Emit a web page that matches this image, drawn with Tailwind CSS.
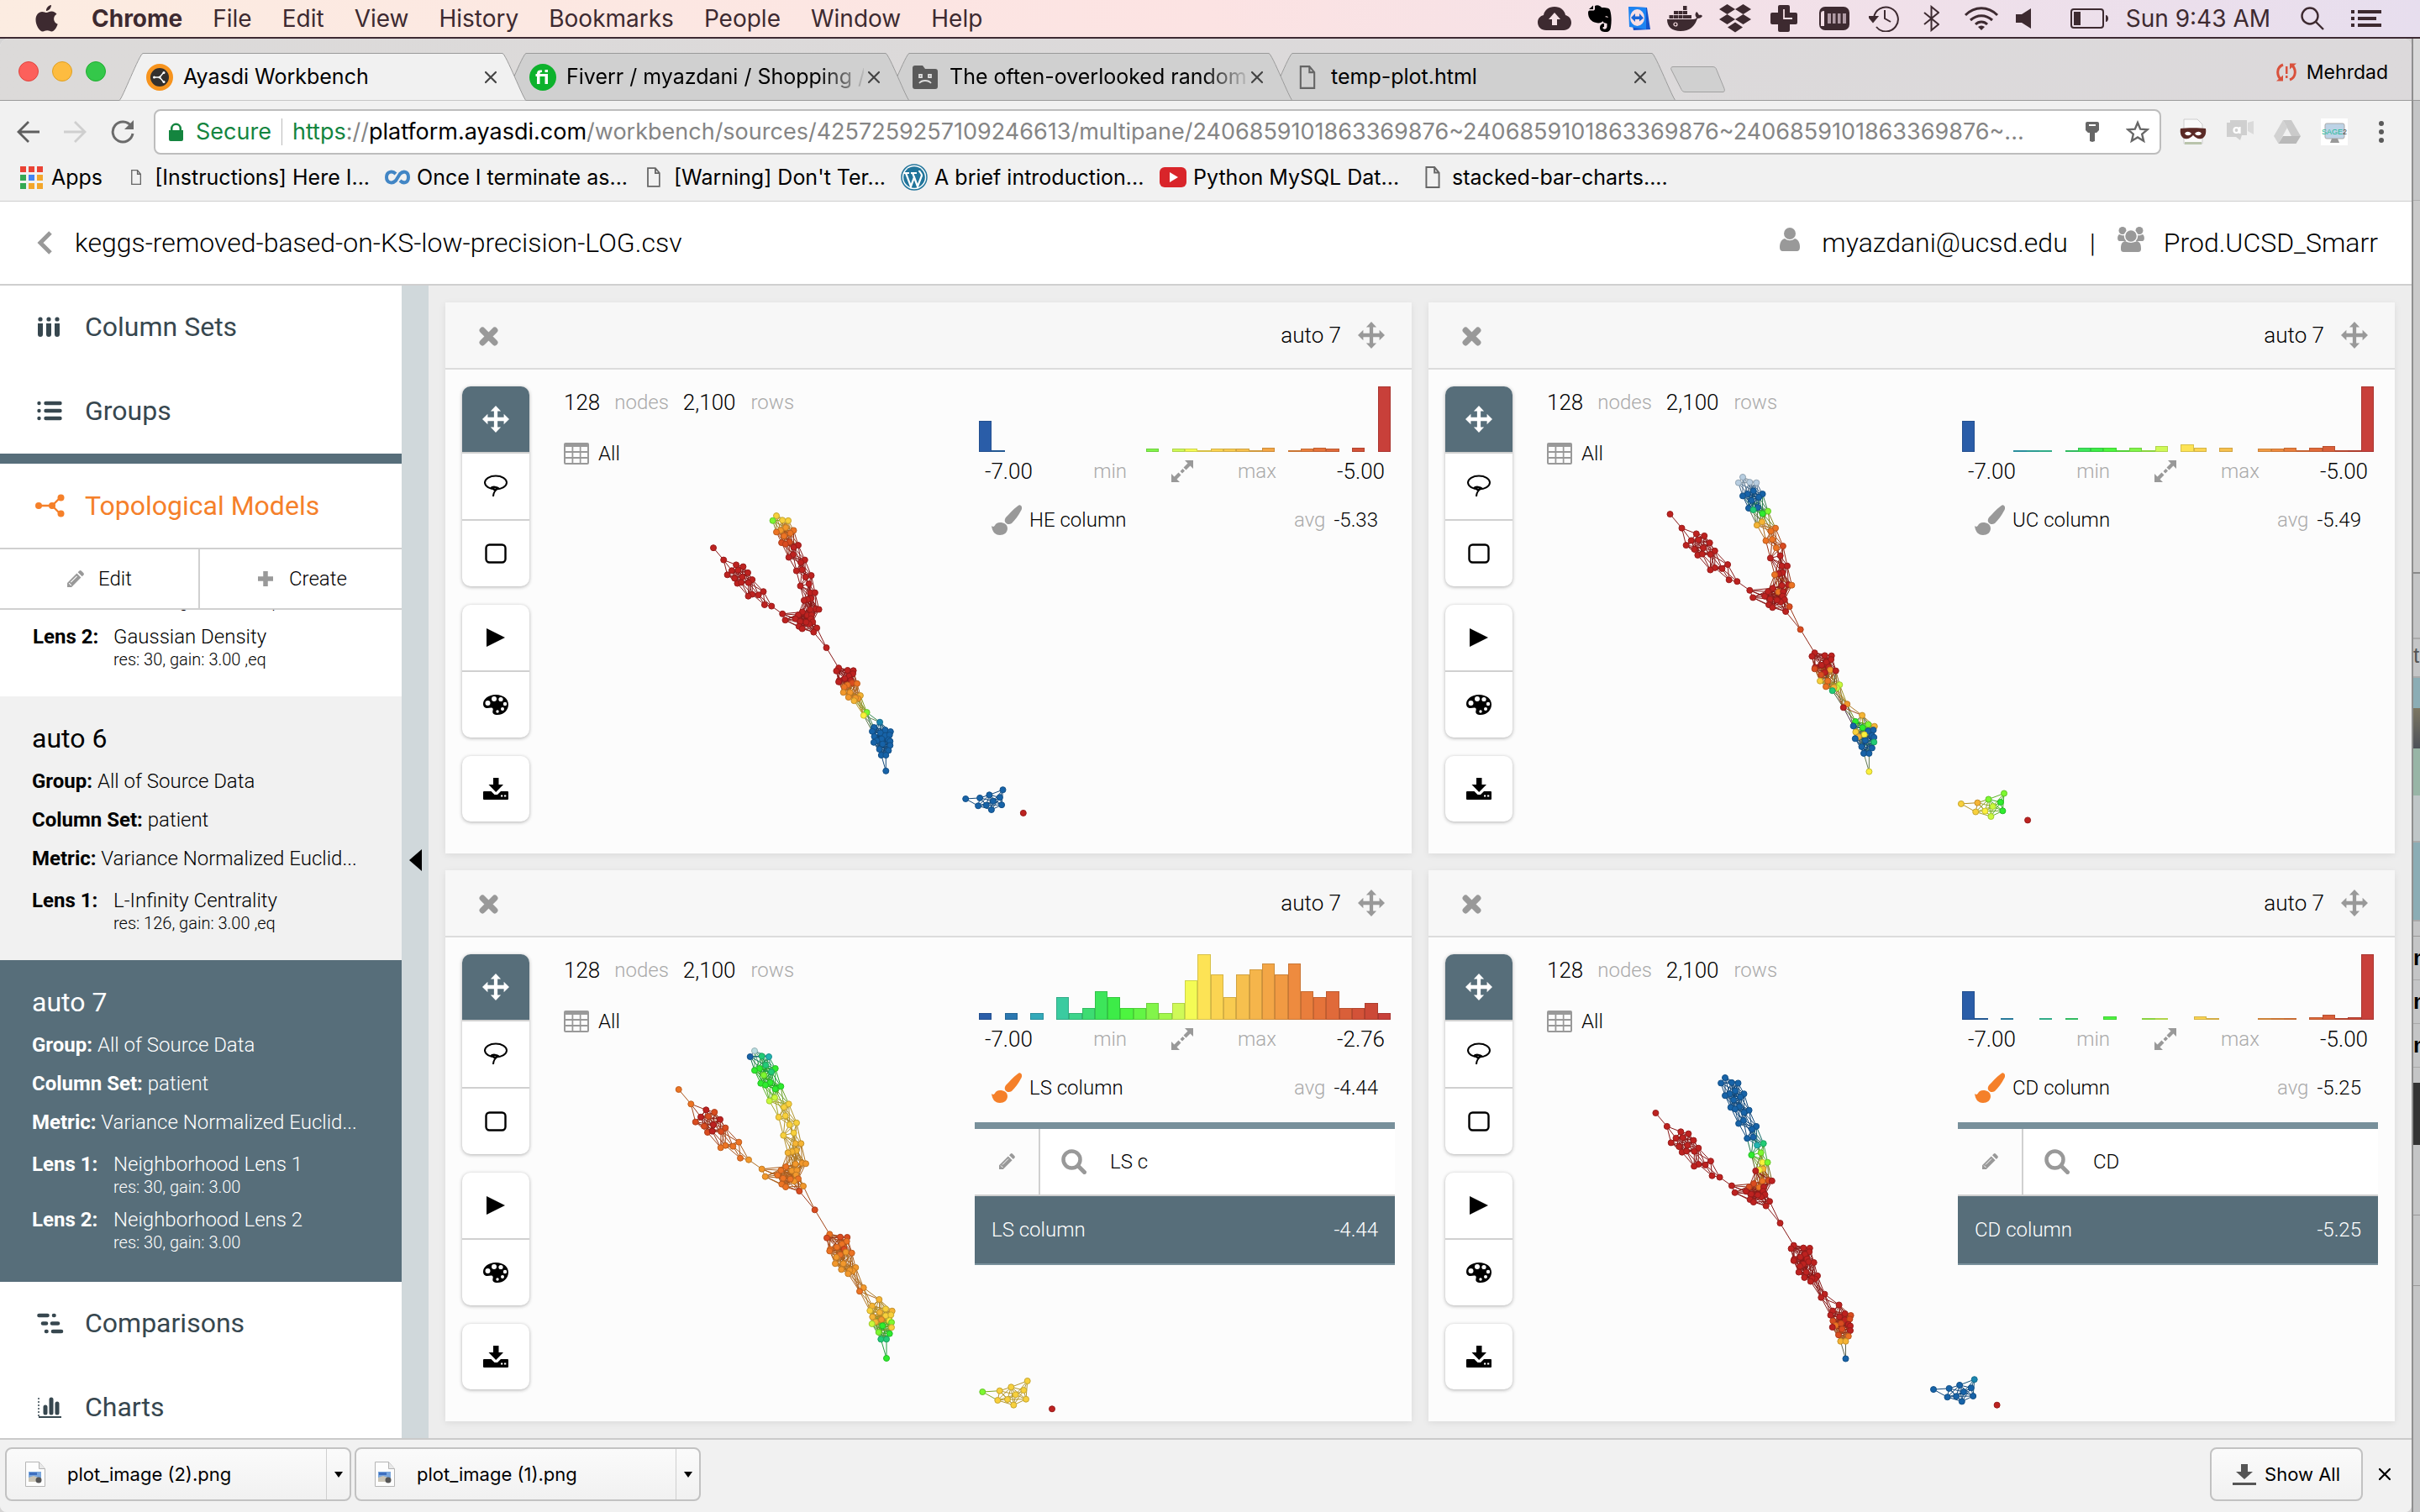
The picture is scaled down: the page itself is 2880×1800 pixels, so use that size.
<!DOCTYPE html>
<html lang="en">
<head>
<meta charset="utf-8">
<title>Ayasdi Workbench</title>
<script src="https://cdn.jsdelivr.net/npm/@tailwindcss/browser@4"></script>
</head>
<body class="bg-[#4a3a44]">
<svg class="hidden" aria-hidden="true">
  <symbol id="move" viewBox="0 0 24 24"><path d="M12 0l4.6 4.8h-3v5.6h5.6v-3L24 12l-4.8 4.6v-3h-5.600v5.600h3L12 24l-4.600-4.800h3v-5.600H4.800v3L0 12l4.800-4.600v3h5.600V4.800h-3z"/></symbol>
  <symbol id="times" viewBox="0 0 24 24"><path d="M5 5l14 14M19 5L5 19" stroke="currentColor" stroke-width="7" stroke-linecap="round" fill="none"/></symbol>
  <symbol id="cross" viewBox="0 0 16 16"><path d="M2 2l12 12M14 2L2 14" stroke="currentColor" stroke-width="2.200" stroke-linecap="round" fill="none"/></symbol>
  <symbol id="lasso" viewBox="0 0 30 28"><g fill="none" stroke="currentColor" stroke-width="2"><ellipse cx="15" cy="9.500" rx="13" ry="8"/><path d="M9 16c2-2 6-2 7 0s-3 3-4 1 3-3 6-1c-3 2-6 5-6 10"/></g></symbol>
  <symbol id="square" viewBox="0 0 26 24"><rect x="1.500" y="1.500" width="23" height="21" rx="4" fill="none" stroke="currentColor" stroke-width="2.400"/></symbol>
  <symbol id="play" viewBox="0 0 22 24"><path d="M0 1v22l22-11z"/></symbol>
  <symbol id="palette" viewBox="0 0 30 24"><path d="M15 0C6.500 0 0 5 0 11c0 3 2 5 5 5 2.500 0 4.500-1 6 0 2 1.500-1 4 1 6.500 1 1.200 3 1.500 5 1.500 8 0 13-6 13-12.500C30 5 24 0 15 0z"/><g fill="#fff"><circle cx="5.500" cy="10" r="3"/><circle cx="13" cy="5" r="3"/><circle cx="21" cy="5.500" r="2.600"/><circle cx="26" cy="11" r="2.200"/><circle cx="23" cy="17" r="2"/><circle cx="17" cy="20" r="1.700"/></g></symbol>
  <symbol id="download" viewBox="0 0 30 26"><path d="M12 0h6.500v8H24l-8.800 9L6.500 8H12zM1 16h8.500l4 4h3.500l4-4H29a1 1 0 0 1 1 1v8a1 1 0 0 1-1 1H1a1 1 0 0 1-1-1v-8a1 1 0 0 1 1-1z"/><path d="M21 21.500h2.300M25 21.500h2.300" stroke="#fff" stroke-width="2"/></symbol>
  <symbol id="grid" viewBox="0 0 30 26"><path d="M2 0h26a2 2 0 0 1 2 2v22a2 2 0 0 1-2 2H2a2 2 0 0 1-2-2V2a2 2 0 0 1 2-2zM2 5v5h7.500V5zM11.300 5v5h7.500V5zM20.500 5v5H28V5zM2 12v5h7.500v-5zM11.300 12v5h7.500v-5zM20.500 12v5H28v-5zM2 19v5h7.500v-5zM11.300 19v5h7.500v-5zM20.500 19v5H28v-5z" fill-rule="evenodd"/></symbol>
  <symbol id="expand" viewBox="0 0 28 28"><path d="M17 1h10v10l-3.500-3.500-5 5-3-3 5-5zM1 27V17l3.500 3.500 5-5 3 3-5 5L11 27zM14.500 11l2.500 2.500-3 3-2.500-2.500z"/></symbol>
  <symbol id="brush" viewBox="0 0 36 36"><path d="M35 1c2 2 1 4 0 6-3 6-7 11-11 15-3 2-6 1-7.500-1-1.200-2-1-4 .5-6C21 11 26 5 31 1.500 33 0 34 0 35 1z"/><path d="M10 21c5 0 9 2.500 9 7 0 5-4 8-9 8-6 0-9-4-10-11 2 1.500 3 1 4-.5C5 22.500 7 21 10 21z"/></symbol>
  <symbol id="pencil" viewBox="0 0 20 20"><path d="M1 14.200L11.800 3.400l4.800 4.800L5.800 19H1zM13 2.200l1.500-1.500c.8-.8 1.800-.8 2.600 0l2.200 2.200c.8.800.8 1.800 0 2.600L17.800 7z"/><path d="M3 14.500l2.500 2.500M5 13.500l7-7" stroke="#fff" stroke-width="1" fill="none"/></symbol>
  <symbol id="search" viewBox="0 0 30 30"><g fill="none" stroke="currentColor"><circle cx="12.500" cy="12.500" r="10" stroke-width="4.500"/><path d="M20 20l7.500 7.500" stroke-width="5" stroke-linecap="round"/></g></symbol>
  <symbol id="doc" viewBox="0 0 16 24"><path d="M1 1h9l5 6v16H1zM10 1v6h5" fill="none" stroke="#666" stroke-width="1.800"/></symbol>
  <symbol id="png" viewBox="0 0 24 30"><path d="M.5.500h16l7 8v21H.5z" fill="#fdfdfd" stroke="#b5b5b5"/><path d="M16.500.500v8h7" fill="#e8e8e8" stroke="#b5b5b5"/><path d="M4 12h15v12H4z" fill="#7aa7dd"/><path d="M4 19l6-2 9 3v4H4z" fill="#c9c4b5"/><path d="M5 13h9v3H5z" fill="#3f6fc0"/><circle cx="16" cy="22" r="3.500" fill="#555"/></symbol>
</svg>

<div class="flex h-screen flex-col overflow-hidden font-['Inter','Liberation_Sans',sans-serif] text-black">
  <!-- System menu bar -->
  <header class="flex h-[46px] shrink-0 items-center border-b-2 border-[#3d2a33] bg-linear-to-r from-[#fcece1] via-[#fce3e3] to-[#e7deee] pr-[46px] pl-[42px] text-[28px] text-[#3d2a30]">
    <svg class="mr-[40px] h-[32px] w-[27px]" viewBox="0 0 27 32" fill="currentColor"><path d="M19 0c.2 3-2.600 7-6 7-.4-3 2.600-6.600 6-7zM13.500 9c1.500 0 3-1.500 6-1.500 2.500 0 4.700 1.300 6 3.200-5 3-4.300 10 1.200 12-1.500 4.200-4.200 8.800-7.200 8.800-2 0-2.800-1.200-5.300-1.200S10.700 31.500 8.900 31.500C5 31.500.5 24 .5 17.500c0-6 3.700-9.600 7.600-9.600 2.400 0 4 1.100 5.400 1.100z"/></svg>
    <nav class="flex items-center gap-[36px]"><b>Chrome</b><span>File</span><span>Edit</span><span>View</span><span>History</span><span>Bookmarks</span><span>People</span><span>Window</span><span>Help</span></nav>
    <div class="ml-auto flex items-center gap-[20px]">
      <svg class="h-[28px] w-[40px]" viewBox="0 0 40 28" fill="currentColor"><path fill-rule="evenodd" d="M10 28C4 28 0 24 0 18.500 0 14 3 11 7 10 8 4 13 0 20 0c7 0 12 4 13 10 4 1 7 4 7 9 0 5-4 9-9 9zM20 7l-7 8h4v7h6v-7h4z"/></svg>
      <svg class="h-[32px] w-[28px]" viewBox="0 0 28 32" fill="#000"><path d="M8 1c3-2 7 0 8 2 4 0 9 0 10 3 2 6 2 14 1 20-.5 4-2 6-6 6s-7-1-7-5c0-3 2-5 5-5v4c-2 0-2 2-.5 2.500 2 .5 4-.500 4-3V22c-3-1-5-1-5-3-1 2-5 3-8 2C4 20 0 16 0 9c0-2 1-2.500 3-2.500h3c1 0 2-.500 2-2zM1 5l5-4.500V5z"/><path d="M20 14c1-1.500 3.500-1 4 1-1-.500-3-.500-4-1z" fill="#f7dfe3"/></svg>
      <svg class="h-[30px] w-[26px]" viewBox="0 0 26 30"><path d="M0 1l22 1 4 26-20 1z" fill="#1653c9"/><path d="M0 1l21 1v26L1 25z" fill="#1d84f2"/><ellipse cx="10.500" cy="14" rx="8.500" ry="10" fill="#fadfe3"/><path d="M3 14l5-5v3.500h5V9l5 5.500-5 4V16H8v3z" fill="#1b66d8"/></svg>
      <svg class="h-[31px] w-[42px]" viewBox="0 0 42 31" fill="currentColor"><path d="M0 16h31c2 0 4-1 4-2-2-2-2-5 0-7 2 1 2 3 3 4 2-.500 3 0 4 1-1 2-3 3-6 3-3 9-9 15-20 15C6 30 0 25 0 16z"/><path d="M2.500 11h5v4h-5zm5.500 0h5v4H8zm5.500 0h5v4h-5zm5.500 0h5v4h-5zM8 6h5v4H8zm5.500 0h5v4h-5zM19 6h5v4h-5zm5 5h5v4h-5zM19 0h4.500v5H19z"/><circle cx="10" cy="22" r="2" fill="none" stroke="#f7dfe3" stroke-width="1.200"/></svg>
      <svg class="h-[34px] w-[38px]" viewBox="0 0 38 34" fill="currentColor"><path d="M9.500 0l9.500 6-9.500 6L0 6zM28.500 0L38 6l-9.500 6L19 6zM9.500 12l9.500 6-9.500 6L0 18zM28.500 12l9.500 6-9.500 6-9.500-6zM19 21.500l9 6-9 6-9-6z"/></svg>
      <svg class="mx-[3px] h-[32px] w-[32px]" viewBox="0 0 32 32" fill="currentColor"><path d="M11 0h10a2 2 0 0 1 2 2v7h7a2 2 0 0 1 2 2v10a2 2 0 0 1-2 2h-7v7a2 2 0 0 1-2 2H11a2 2 0 0 1-2-2v-7H2a2 2 0 0 1-2-2V11a2 2 0 0 1 2-2h7V2a2 2 0 0 1 2-2z"/><path d="M16 5v11h10" fill="none" stroke="#f5dfe4" stroke-width="1.800"/></svg>
      <svg class="mx-[3px] h-[28px] w-[36px]" viewBox="0 0 36 28"><rect width="36" height="28" rx="7" fill="#3d2a30"/><path d="M6 5v18H2V8c0-2 1-3 4-3z" fill="#f3dfe6"/><path d="M10 8h4v12h-4zm6 0h3.500v12H16zm6 0h3.500v12H22zm6 0h4v12h-4z" fill="#b09ba5"/></svg>
      <svg class="h-[32px] w-[36px]" viewBox="0 0 36 32" fill="none" stroke="currentColor" stroke-width="2"><path d="M6 15A14.500 14.500 0 1 1 9 26"/><path d="M0 14h10l-5 6z" fill="currentColor"/><path d="M19 6v10l7 4"/></svg>
      <svg class="mx-[9px] h-[32px] w-[19px]" viewBox="0 0 19 32" fill="none" stroke="currentColor" stroke-width="2"><path d="M1 9l17 14-8.500 7V2L18 9 1 23"/></svg>
      <svg class="h-[28px] w-[42px]" viewBox="0 0 42 28" fill="none" stroke="currentColor" stroke-width="3"><path d="M2 10c11-11 27-11 38 0M8 16c8-7 18-7 26 0M14 21c4-4 10-4 14 0"/><path d="M17 24a6 6 0 0 1 8 0l-4 4z" fill="currentColor" stroke="none"/></svg>
      <svg class="mr-[27px] h-[24px] w-[18px]" viewBox="0 0 18 24" fill="currentColor"><path d="M0 7h7l11-7v24L7 17H0z"/></svg>
      <svg class="h-[24px] w-[46px]" viewBox="0 0 46 24" fill="currentColor"><rect x="1" y="1" width="38" height="22" rx="3" fill="none" stroke="currentColor" stroke-width="2"/><path d="M4 4h8v16H4zM42 8c4 0 4 8 0 8z"/></svg>
      <time>Sun 9:43 AM</time>
      <svg class="ml-[16px] h-[28px] w-[28px]" viewBox="0 0 28 28" fill="none" stroke="currentColor" stroke-width="2.400"><circle cx="11" cy="11" r="9.500"/><path d="M18 18l9 9"/></svg>
      <svg class="ml-[12px] h-[20px] w-[36px]" viewBox="0 0 36 20" fill="currentColor"><path d="M0 0h4v4H0zm8 0h28v4H8zM0 8h4v4H0zm8 0h22v4H8zm-8 8h4v4H0zm8 0h28v4H8z"/></svg>
    </div>
  </header>

  <div class="flex min-h-0 flex-1 bg-[#d5d4d4]">
    <div class="flex min-w-0 flex-1 flex-col overflow-hidden rounded-t-[10px] rounded-b-[8px] bg-[#f1f1f1]">
      <!-- Tabs -->
      <div class="flex h-[74px] shrink-0 items-end border-b border-[#9a9a9a] bg-linear-to-r from-[#dcdad9] to-[#dcd9db]">
        <div class="mb-[22px] ml-[22px] flex w-[120px] gap-[16px]">
          <button aria-label="Close window" class="size-[24px] rounded-full border border-[#e0443e] bg-[#fc605b]"></button>
          <button aria-label="Minimise window" class="size-[24px] rounded-full border border-[#dfa023] bg-[#fdbc40]"></button>
          <button aria-label="Zoom window" class="size-[24px] rounded-full border border-[#1fae30] bg-[#34c84a]"></button>
        </div>
        <div class="relative z-40 -mb-px flex h-[57px] w-[484px] items-center pr-[34px] pl-[32px]">
          <svg class="absolute inset-0 h-full w-full" viewBox="0 0 484 57" preserveAspectRatio="none"><path d="M0 56.500C3 56 24 1 28 .5h428c4 .5 25 55 28 56" fill="#f1f1f1" stroke="#9a9a9a"/></svg>
          <svg class="relative mr-[12px] size-[32px]" viewBox="0 0 32 32"><circle cx="16" cy="16" r="13.500" fill="#33302e" stroke="#f7941e" stroke-width="5"/><path d="M9 16h7l5-6M16 16l5 6" stroke="#fff" stroke-width="1.400" fill="none"/><g fill="#fff"><circle cx="9.500" cy="16" r="1.500"/><circle cx="16" cy="16" r="1.500"/><circle cx="21" cy="10.500" r="1.500"/><circle cx="21" cy="21.500" r="1.500"/></g></svg>
          <span class="relative flex-1 overflow-hidden text-[25px] whitespace-nowrap">Ayasdi Workbench</span>
          <button aria-label="Close tab" class="relative text-[#444]"><svg class="size-[16px]"><use href="#cross"/></svg></button>
        </div>
        <div class="relative z-30 -mb-px -ml-[28px] flex h-[57px] w-[484px] items-center pr-[34px] pl-[32px]">
          <svg class="absolute inset-0 h-full w-full" viewBox="0 0 484 57" preserveAspectRatio="none"><path d="M0 56.500C3 56 24 1 28 .5h428c4 .5 25 55 28 56z" fill="#d0d0d0" stroke="#9a9a9a"/></svg>
          <svg class="relative mr-[12px] size-[32px]" viewBox="0 0 32 32"><circle cx="16" cy="16" r="16" fill="#0db22c"/><path d="M9 24v-9H7.500v-3H9c0-4 2-5 6-4.500V10c-2 0-2.500.5-2.500 2H22v12h-3.500v-9h-6v9zM18.500 7H22v3h-3.500z" fill="#fff"/></svg>
          <span class="relative mr-[4px] flex-1 overflow-hidden bg-linear-to-r from-black from-85% to-black/10 bg-clip-text text-[25px] whitespace-nowrap text-transparent">Fiverr / myazdani / Shopping /</span>
          <button aria-label="Close tab" class="relative text-[#444]"><svg class="size-[16px]"><use href="#cross"/></svg></button>
        </div>
        <div class="relative z-20 -mb-px -ml-[28px] flex h-[57px] w-[484px] items-center pr-[34px] pl-[32px]">
          <svg class="absolute inset-0 h-full w-full" viewBox="0 0 484 57" preserveAspectRatio="none"><path d="M0 56.500C3 56 24 1 28 .5h428c4 .5 25 55 28 56z" fill="#d0d0d0" stroke="#9a9a9a"/></svg>
          <svg class="relative mr-[14px] h-[28px] w-[30px]" viewBox="0 0 30 28"><path d="M3 0h9l3 4h12a3 3 0 0 1 3 3v18a3 3 0 0 1-3 3H3a3 3 0 0 1-3-3V3a3 3 0 0 1 3-3z" fill="#5a5a5a"/><path d="M8 11h3v3H8zm11 0h3v3h-3zM8 21c3-4 11-4 14 0" fill="none" stroke="#ddd" stroke-width="1.800"/></svg>
          <span class="relative mr-[4px] flex-1 overflow-hidden bg-linear-to-r from-black from-85% to-black/10 bg-clip-text text-[25px] whitespace-nowrap text-transparent">The often-overlooked random</span>
          <button aria-label="Close tab" class="relative text-[#444]"><svg class="size-[16px]"><use href="#cross"/></svg></button>
        </div>
        <div class="relative z-10 -mb-px -ml-[28px] flex h-[57px] w-[484px] items-center pr-[34px] pl-[36px]">
          <svg class="absolute inset-0 h-full w-full" viewBox="0 0 484 57" preserveAspectRatio="none"><path d="M0 56.500C3 56 24 1 28 .5h428c4 .5 25 55 28 56z" fill="#d0d0d0" stroke="#9a9a9a"/></svg>
          <svg class="relative mr-[18px] h-[28px] w-[20px]"><use href="#doc"/></svg>
          <span class="relative flex-1 overflow-hidden text-[25px] whitespace-nowrap">temp-plot.html</span>
          <button aria-label="Close tab" class="relative text-[#444]"><svg class="size-[16px]"><use href="#cross"/></svg></button>
        </div>
        <button aria-label="New tab" class="mb-[9px] -ml-[6px]"><svg class="h-[31px] w-[65px]" viewBox="0 0 65 31"><path d="M3 .5h47c3 0 4 1 5 4l9 22c1 3 0 4-2 4H18c-3 0-4-1-5-3L1 4C0 2 1 .5 3 .5z" fill="#d0d0d0" stroke="#a0a0a0"/></svg></button>
        <button class="mb-[16px] ml-auto flex items-center gap-[12px] pr-[28px] text-[23px]"><svg class="h-[22px] w-[24px]" viewBox="0 0 24 22" fill="none" stroke="#d9513c" stroke-width="3"><path d="M8 2C0 5 0 15 6 20M16 20c8-3 8-13 2-18"/><path d="M0 21.500h8v-7zM24 .5h-8v7zM11 4h2.500v9H11zm0 11h2.500v3H11z" fill="#d9513c" stroke="none"/></svg>Mehrdad</button>
      </div>
      <!-- Address bar -->
      <div class="flex h-[74px] shrink-0 items-center pr-[28px] pl-[20px]">
        <div class="flex w-[163px] items-center gap-[29px] text-[#6b6b6b]">
          <button aria-label="Back"><svg class="h-[26px] w-[27px]" viewBox="0 0 27 26" fill="none" stroke="#5f5f5f" stroke-width="2.800"><path d="M27 13H3M14 1L2 13l12 12"/></svg></button>
          <button aria-label="Forward"><svg class="h-[26px] w-[27px]" viewBox="0 0 27 26" fill="none" stroke="#cfcfcf" stroke-width="2.800"><path d="M0 13h24M13 1l12 12-12 12"/></svg></button>
          <button aria-label="Reload"><svg class="h-[28px] w-[28px]" viewBox="0 0 28 28" fill="none" stroke="#6b6b6b" stroke-width="3"><path d="M24 7A12 12 0 1 0 26 16"/><path d="M27 0v11H16z" fill="#6b6b6b" stroke="none"/></svg></button>
        </div>
        <div class="flex h-[54px] min-w-0 flex-1 items-center overflow-hidden rounded-[8px] border-2 border-[#bdbdbd] bg-white pr-[12px] pl-[16px] text-[27px] whitespace-nowrap">
          <svg class="mr-[15px] h-[22px] w-[17px]" viewBox="0 0 17 22" fill="#14853f"><path d="M0 9h17v11a2 2 0 0 1-2 2H2a2 2 0 0 1-2-2zM2 9V7a6.500 6.500 0 0 1 13 0v2h-2.500V7a4 4 0 0 0-8 0v2z"/></svg>
          <span class="text-[#14853f]">Secure</span>
          <span class="mx-[12px] h-[32px] w-px bg-[#bbb]"></span>
          <a href="#" class="text-[#858585]"><span class="text-[#14853f]">https</span>://<span class="text-black">platform.ayasdi.com</span>/workbench/sources/4257259257109246613/multipane/2406859101863369876~2406859101863369876~2406859101863369876~...</a>
          <svg class="mr-[32px] ml-auto h-[24px] w-[16px] shrink-0" viewBox="0 0 16 24"><path d="M0 2a2 2 0 0 1 2-2h12a2 2 0 0 1 2 2v8l-3 3h-2v10l-3 1-3-1V13H3l-3-3zM4 3v2h8V3z" fill="#666" fill-rule="evenodd"/></svg>
          <svg class="h-[28px] w-[28px] shrink-0" viewBox="0 0 28 28" fill="none" stroke="#666" stroke-width="2.400"><path d="M14 3l3.200 7.600 8.300.7-6.300 5.400 1.900 8.100-7.100-4.300-7.100 4.300 1.900-8.100-6.300-5.400 8.300-.7z"/></svg>
        </div>
        <div class="ml-[22px] flex items-center gap-[24px]">
          <svg class="size-[32px]" viewBox="0 0 32 32"><path d="M5 1h16l6 6v23H5z" fill="#fafafa" stroke="#ccc"/><path d="M6 28h20v3H6z" fill="#b9c4ab"/><path d="M1 12c6-1 24-1 30 0 1 6-1 11-5 12-4 1-7-1-10-4-3 3-6 5-10 4-4-1-6-6-5-12z" fill="#5a2a26"/><path d="M6 18c2-3 5-3 8 0-2 3-6 3-8 0zm12 0c3-3 6-3 8 0-2 3-6 3-8 0z" fill="#fff"/></svg>
          <svg class="h-[28px] w-[32px]" viewBox="0 0 32 28" fill="#cfcfcf"><path d="M4 0h20v18h-6l-2 6-5-4H0V3h4z"/><path d="M25 3l7-2v16l-7-4z" fill="#dadada"/><circle cx="11.500" cy="12" r="3" fill="none" stroke="#fff" stroke-width="2.200"/><path d="M15.500 8v8" stroke="#fff" stroke-width="2.200"/></svg>
          <svg class="h-[28px] w-[32px]" viewBox="0 0 32 28"><path d="M11 0h10l11 19H21z" fill="#cacaca"/><path d="M11 0l5 9L5.500 28 0 19z" fill="#d2d2d2"/><path d="M11 19h21l-5.500 9h-21z" fill="#b9b9b9"/></svg>
          <svg class="size-[32px]" viewBox="0 0 32 32"><path d="M0 0h32v32H0z" fill="#fff"/><rect x="5" y="6" width="23" height="18" rx="2" fill="#bdd3e6" stroke="#aaa"/><path d="M13 24h7l2 5H11z" fill="#999"/><text x="1" y="19" font-size="9" font-family="Liberation Sans" fill="#19b996">SAGE<tspan fill="#444">2</tspan></text></svg>
          <svg class="ml-[8px] h-[26px] w-[16px]" viewBox="0 0 16 26" fill="#5a5a5a"><circle cx="8" cy="3" r="3"/><circle cx="8" cy="13" r="3"/><circle cx="8" cy="23" r="3"/></svg>
        </div>
      </div>
      <!-- Bookmarks -->
      <nav class="flex h-[46px] shrink-0 items-start gap-[18px] border-b border-[#cfcfcf] pl-[24px] text-[25px] leading-[34px] whitespace-nowrap">
        <a href="#" class="mr-[16px] flex items-center gap-[10px]"><svg class="size-[27px]" viewBox="0 0 27 27"><path d="M0 0h7v7H0zm10 0h7v7h-7zm10 0h7v7h-7z" fill="#ea4335"/><path d="M0 10h7v7H0z" fill="#34a853"/><path d="M10 10h7v7h-7z" fill="#4285f4"/><path d="M20 10h7v7h-7zM10 20h7v7h-7zm10 0h7v7h-7z" fill="#f3a62b"/><path d="M0 20h7v7H0z" fill="#34a853"/></svg>Apps</a>
        <a href="#" class="flex w-[284px] items-center gap-[16px]"><svg class="h-[26px] w-[18px]"><use href="#doc"/></svg>[Instructions] Here I...</a>
        <a href="#" class="flex w-[294px] items-center gap-[8px]"><svg class="h-[18px] w-[30px]" viewBox="0 0 30 18" fill="none" stroke="#4286c5" stroke-width="4"><path d="M13 5C9 1 2 2 2 9s7 8 11 4l5-8c4-4 10-3 10 4s-6 8-10 4"/></svg>Once I terminate as...</a>
        <a href="#" class="flex w-[284px] items-center gap-[16px]"><svg class="h-[26px] w-[18px]"><use href="#doc"/></svg>[Warning] Don't Ter...</a>
        <a href="#" class="flex w-[290px] items-center gap-[8px]"><svg class="size-[32px]" viewBox="0 0 32 32"><circle cx="16" cy="16" r="15" fill="#fff" stroke="#21759b" stroke-width="1.500"/><circle cx="16" cy="16" r="12.800" fill="#21759b"/><path d="M4 11h6M12 11h7M6 11l6 16 4-11-2-5M16 16l4 11 5-13c0-3-3-4-3-6" fill="none" stroke="#fff" stroke-width="2.200"/></svg>A brief introduction...</a>
        <a href="#" class="flex w-[298px] items-center gap-[8px]"><svg class="h-[24px] w-[32px]" viewBox="0 0 32 24"><rect width="32" height="24" rx="6" fill="#d9252a"/><path d="M12 6l10 6-10 6z" fill="#fff"/></svg>Python MySQL Dat...</a>
        <a href="#" class="flex items-center gap-[14px]"><svg class="h-[26px] w-[18px]"><use href="#doc"/></svg>stacked-bar-charts....</a>
      </nav>

      <!-- Workbench -->
      <div class="flex min-h-0 flex-1 flex-col bg-white font-['Roboto',sans-serif]">
        <div class="flex h-[100px] shrink-0 items-center border-b-2 border-[#cfcfcf] pr-[40px] pl-[44px] text-[32px] font-light">
          <button aria-label="Back to sources"><svg class="mr-[26px] h-[28px] w-[19px]" viewBox="0 0 19 28"><path d="M16 2L4 14l12 12" fill="none" stroke="#999" stroke-width="5"/></svg></button>
          <h1>keggs-removed-based-on-KS-low-precision-LOG.csv</h1>
          <svg class="mr-[26px] mb-[8px] ml-auto h-[28px] w-[24px]" viewBox="0 0 24 28" fill="#999"><ellipse cx="12" cy="7" rx="7" ry="7"/><path d="M6 13c4 3 8 3 12 0 4 1 6 5 6 10 0 3-1 5-4 5H4c-3 0-4-2-4-5 0-5 2-9 6-10z"/></svg>
          <span>myazdani@ucsd.edu</span>
          <span class="mx-[26px]">|</span>
          <svg class="mr-[23px] mb-[8px] h-[30px] w-[32px]" viewBox="0 0 32 30" fill="#999"><circle cx="6" cy="4.500" r="4.500"/><circle cx="26" cy="4.500" r="4.500"/><path d="M2 9c4 2 6 1 7 1 0 3 1 5 2 7H2c-3-1-2-7 0-8zM30 9c-4 2-6 1-7 1 0 3-1 5-2 7h9c3-1 2-7 0-8z"/><circle cx="16" cy="11" r="7.500" stroke="#fff" stroke-width="1.500"/><path d="M9 17c5 2.500 9 2.500 14 0 4 1 5 4 5 9 0 3-1 4-4 4H8c-3 0-4-1-4-4 0-5 1-8 5-9z"/></svg>
          <span>Prod.UCSD_Smarr</span>
        </div>
        <div class="flex min-h-0 flex-1">
          <aside class="flex w-[478px] shrink-0 flex-col overflow-hidden text-[24px] font-light">
            <a href="#" class="flex h-[100px] shrink-0 items-center pb-[2px] pl-[45px] text-[32px] font-normal text-[#37474f]"><svg class="mr-[29px] h-[24px] w-[27px]" viewBox="0 0 27 24" fill="currentColor"><path d="M0 8h6v13a3 3 0 0 1-6 0zM10 8h6v13a3 3 0 0 1-6 0zM20 8h6v13a3 3 0 0 1-6 0z"/><circle cx="3" cy="3" r="2.600"/><circle cx="13" cy="3" r="2.600"/><circle cx="23" cy="3" r="2.600"/></svg>Column Sets</a>
            <a href="#" class="flex h-[100px] shrink-0 items-center pb-[2px] pl-[44px] text-[32px] font-normal text-[#37474f]"><svg class="mr-[27px] h-[24px] w-[30px]" viewBox="0 0 30 24" fill="none" stroke="currentColor" stroke-width="4.400" stroke-linecap="round"><path d="M2.500 3h0M2.500 12h0M2.500 21h0M10.500 3h17M10.500 12h17M10.500 21h17"/></svg>Groups</a>
            <a href="#" class="flex h-[112px] shrink-0 items-center border-t-[12px] border-[#576e7a] pl-[42px] text-[32px] font-normal text-[#f5802a]"><svg class="mr-[24px] h-[28px] w-[35px]" viewBox="0 0 35 28" fill="currentColor"><path d="M4 14h16l10-10M20 14l10 10" fill="none" stroke="currentColor" stroke-width="2.400"/><circle cx="4" cy="14" r="4"/><circle cx="20" cy="14" r="4"/><circle cx="30.500" cy="4.500" r="4"/><circle cx="30.500" cy="23.500" r="4"/></svg>Topological Models</a>
            <div class="flex h-[74px] shrink-0 border-y-2 border-[#d0d0d0]">
              <button class="flex w-[238px] items-center border-r-2 border-[#d0d0d0] pl-[79px]"><svg class="mr-[17px] size-[21px] fill-[#999]"><use href="#pencil"/></svg>Edit</button>
              <button class="flex flex-1 items-center pl-[68px]"><svg class="mr-[18px] size-[20px]" viewBox="0 0 20 20"><path d="M10 1v18M1 10h18" stroke="#999" stroke-width="5.500"/></svg>Create</button>
            </div>
            <div class="flex min-h-0 flex-1 flex-col justify-end overflow-hidden">
              <section class="h-[138px] shrink-0 pt-[13px] pl-[39px]">
                <p class="pl-[96px] text-[20px] leading-[24px]">res: 126, gain: 3.00 ,eq</p>
                <dl class="mt-[15px] flex leading-[30px]"><dt class="w-[96px] font-bold">Lens 2:</dt><dd>Gaussian Density<span class="block text-[20px] leading-[24px]">res: 30, gain: 3.00 ,eq</span></dd></dl>
              </section>
              <section class="h-[314px] shrink-0 bg-[#f1f1f1] pt-[30px] pl-[38px] leading-[46px] whitespace-nowrap">
                <h2 class="mb-[8px] text-[32px] leading-[40px] font-normal">auto 6</h2>
                <p><b class="font-bold">Group:</b> All of Source Data</p>
                <p><b class="font-bold">Column Set:</b> patient</p>
                <p><b class="font-bold">Metric:</b> Variance Normalized Euclid...</p>
                <dl class="mt-[12px] flex leading-[30px]"><dt class="w-[97px] font-bold">Lens 1:</dt><dd>L-Infinity Centrality<span class="block text-[20px] leading-[24px]">res: 126, gain: 3.00 ,eq</span></dd></dl>
              </section>
              <section class="h-[383px] shrink-0 bg-[#576e7a] pt-[30px] pl-[38px] leading-[46px] whitespace-nowrap text-white">
                <h2 class="mb-[8px] text-[32px] leading-[40px] font-normal">auto 7</h2>
                <p><b class="font-bold">Group:</b> All of Source Data</p>
                <p><b class="font-bold">Column Set:</b> patient</p>
                <p><b class="font-bold">Metric:</b> Variance Normalized Euclid...</p>
                <dl class="mt-[12px] flex leading-[30px]"><dt class="w-[97px] font-bold">Lens 1:</dt><dd>Neighborhood Lens 1<span class="block text-[20px] leading-[24px]">res: 30, gain: 3.00</span></dd></dl>
                <dl class="mt-[12px] flex leading-[30px]"><dt class="w-[97px] font-bold">Lens 2:</dt><dd>Neighborhood Lens 2<span class="block text-[20px] leading-[24px]">res: 30, gain: 3.00</span></dd></dl>
              </section>
            </div>
            <a href="#" class="flex h-[98px] shrink-0 items-center pl-[44px] text-[32px] font-normal text-[#37474f]"><svg class="mr-[25px] h-[25px] w-[32px]" viewBox="0 0 32 25" fill="none" stroke="currentColor" stroke-width="4.600" stroke-linecap="round"><path d="M2.500 3h10M20 3h.5M7 12.500h4M18 12.500h7M11 22h.5M19 22h10"/></svg>Comparisons</a>
            <a href="#" class="flex h-[88px] shrink-0 items-center pt-[13px] pl-[45px] text-[32px] font-normal text-[#37474f]"><svg class="mr-[28px] h-[26px] w-[28px]" viewBox="0 0 28 26" fill="none" stroke="currentColor"><path d="M1 25h27" stroke-width="2"/><path d="M1 2v22" stroke-width="1.500" stroke-dasharray="2 2"/><path d="M9 13v7M16 4v16M23 9v11" stroke-width="5" stroke-linecap="round"/></svg>Charts</a>
          </aside>
          <button aria-label="Collapse sidebar" class="flex w-[32px] shrink-0 items-center justify-center bg-[#d0d8db] pb-[4px]"><svg class="h-[26px] w-[15px]" viewBox="0 0 15 26"><path d="M15 0v26L0 13z"/></svg></button>
          <main id="panes" class="grid min-w-0 flex-1 grid-cols-2 grid-rows-2 gap-[20px] bg-[#ededed] p-[20px]"></main>
        </div>
      </div>

      <!-- Downloads -->
      <footer class="flex h-[88px] shrink-0 items-center gap-[4px] border-t-2 border-[#cacaca] bg-[#f1f1f1] pr-[24px] pb-[4px] pl-[6px] text-[22px]">
        <div class="flex h-[64px] w-[412px] items-center rounded-[8px] border-2 border-[#c2c2c2] bg-linear-to-b from-[#fbfbfb] to-[#f1f1f1]"><svg class="mr-[26px] ml-[22px] h-[30px] w-[24px]"><use href="#png"/></svg>plot_image (2).png<button aria-label="More" class="ml-auto flex h-full w-[28px] items-center justify-center border-l border-[#cfcfcf]"><svg class="h-[7px] w-[10px]" viewBox="0 0 10 7"><path d="M0 0h10L5 7z"/></svg></button></div>
        <div class="flex h-[64px] w-[412px] items-center rounded-[8px] border-2 border-[#c2c2c2] bg-linear-to-b from-[#fbfbfb] to-[#f1f1f1]"><svg class="mr-[26px] ml-[22px] h-[30px] w-[24px]"><use href="#png"/></svg>plot_image (1).png<button aria-label="More" class="ml-auto flex h-full w-[28px] items-center justify-center border-l border-[#cfcfcf]"><svg class="h-[7px] w-[10px]" viewBox="0 0 10 7"><path d="M0 0h10L5 7z"/></svg></button></div>
        <button class="ml-auto flex h-[64px] w-[182px] items-center justify-center gap-[10px] rounded-[8px] border-2 border-[#c2c2c2] bg-linear-to-b from-[#fbfbfb] to-[#f1f1f1]"><svg class="h-[25px] w-[28px]" viewBox="0 0 28 25" fill="#555"><path d="M10 0h8v9h6L14 18 4 9h6zM0 22h28v3H0z"/></svg>Show All</button>
        <button aria-label="Close downloads bar" class="ml-[14px]"><svg class="size-[16px]"><use href="#cross"/></svg></button>
      </footer>
    </div>
    <!-- Window behind -->
    <div class="flex w-[10px] shrink-0 flex-col overflow-hidden border-l-2 border-[#8f8f8f] bg-[#c4c5c6] font-['Liberation_Sans',sans-serif] text-[26px]">
      <div class="h-[74px] shrink-0 border-b border-[#9a9a9a] bg-[#d9d9d9]"></div>
      <div class="h-[119px] shrink-0 border-b border-[#b0b0b0]"></div>
      <div class="h-[444px] shrink-0 border-b-2 border-[#8a8a8a] bg-[#cacaca]"></div>
      <div class="h-[78px] shrink-0 border-b-2 border-[#aaa]"></div>
      <div class="h-[46px] shrink-0 border-b-2 border-[#aaa] text-[#555]">tr</div>
      <div class="h-[36px] shrink-0 bg-[#8badb5]"></div>
      <div class="h-[48px] shrink-0 bg-linear-to-b from-[#7d7762] to-[#4d5158]"></div>
      <div class="h-[56px] shrink-0 bg-[#98b5a6]"></div>
      <div class="h-[56px] shrink-0 border-b-2 border-[#aaa] bg-[#bfc6c7]"></div>
      <div class="h-[94px] shrink-0 border-b-2 border-[#aaa] bg-[#8badb5]"></div>
      <div class="h-[18px] shrink-0 border-b border-[#999]"></div>
      <div class="h-[52px] shrink-0 border-b border-[#aaa] leading-[50px] font-bold">m</div>
      <div class="h-[52px] shrink-0 border-b border-[#aaa] leading-[50px] font-bold">m</div>
      <div class="h-[52px] shrink-0 border-b border-[#aaa] leading-[50px] font-bold">m</div>
      <div class="mt-[18px] h-[74px] shrink-0 bg-[#333]"></div>
      <div class="h-[84px] shrink-0 border-b border-[#999]"></div>
      <div class="h-[84px] shrink-0 border-b border-[#999]"></div>
    </div>
  </div>
</div>

<script>
// Shared layout of the topological network; each group is a flat x,y list.
const groups = {
  arm: [310,32,294,53,336,51,361,53,350,83,328,95,384,95,310,102,370,107,343,119,332,148,366,145,349,154,404,159,384,168,382,199,363,211,432,222,415,233,420,264,396,269,460,289,435,296,450,325,413,334,456,363,476,363,459,388,444,392,429,396,480,433,493,435,456,436],
  hub: [422,446,404,459,443,460,461,459,392,476,412,487,458,475,466,489,451,498,407,508,421,518,484,515,470,533,438,490],
  left: [39,170,83,222,137,243,167,251,118,268,145,266,187,277,99,286,130,301,163,296,206,307,142,323,159,319,190,320,254,358,206,370,189,378,233,373,259,415,289,421,336,454,348,481],
  bridge: [525,600],
  mid: [578,687,568,700,616,697,641,698,639,712,622,722,604,733,580,741,578,747,630,740,636,751,657,754,616,760,602,769,598,792,627,792,671,806,620,813,661,818,650,816,644,828,699,878,685,891],
  low: [755,920,730,943,722,960,778,954,801,961,757,966,778,978,797,975,731,982,763,992,742,1000,729,1007,792,996,799,1002,767,1014,799,1020,753,1037,792,1042,761,1062,781,1062,781,1130],
  cluster: [1124,1250,1185,1246,1226,1233,1284,1211,1271,1244,1242,1260,1178,1280,1213,1277,1279,1276,1235,1297],
  lone: [1372,1311]
};
const nodes = [];
for (const [g, l] of Object.entries(groups)) for (let i = 0; i < l.length; i += 2) nodes.push({ x: l[i], y: l[i + 1], g });
const edges = [];
nodes.forEach((a, i) => nodes.forEach((b, j) => {
  if (j <= i) return;
  const d = Math.hypot(a.x - b.x, a.y - b.y);
  const pair = [a.g, b.g].sort().join('-');
  let reach = a.g === b.g ? 76 : pair === 'arm-hub' ? 74 : pair === 'hub-left' ? 88 : pair === 'bridge-hub' ? 96 : pair === 'bridge-mid' ? 103 : pair === 'low-mid' ? 84 : 0;
  if (a.g === 'mid' && (a.y > 870 || b.y > 870)) reach = 92;
  if (a.g === 'low' && a.g === b.g && b.y > 1100) reach = 72;
  if (d < reach) edges.push([i, j]);
}));
const palette = { p:[186,222,226], q:[183,205,224], b:[23,99,168], k:[26,134,176], c:[34,180,176], t:[34,204,118], g:[46,236,46], l:[125,248,48], y:[200,250,60], Y:[250,240,60], m:[248,208,60], a:[245,180,52], o:[242,152,44], O:[236,116,36], r:[217,76,32], R:[189,34,32] };
const css = (c, k = 1) => 'rgb(' + c.map(v => Math.round(v * k)).join(',') + ')';
const binColors = ['#2a5da8','#2a68ac','#2a77b0','#2f90b5','#33a9b9','#36b9ad','#3acba0','#3dd48b','#3ddc72','#3de55a','#3dec48','#4df53f','#63f545','#82f54a','#a3f84c','#cff957','#f4fb55','#fde355','#fbd452','#f8cb50','#f6c04e','#f5b54b','#f3a646','#f19a43','#ee8b3f','#e97e3c','#e5733a','#e06a3a','#d95f39','#d35238','#cc4937','#c8403a'];
const panes = [
  { name: 'HE column', avg: '-5.33', max: '-5.00', x: 394, y: 254, s: .83,
    colors: 'mlmmooOOOOrrr' + 'R'.repeat(20) + 'R'.repeat(14) + 'R'.repeat(22) + 'R' + 'R'.repeat(10) + 'rOOOooaoooa' + 'lY' + 'k' + 'b'.repeat(20) + 'b'.repeat(10) + 'R',
    bins: [48,3,0,0,0,0,0,0,0,0,0,0,0,5,0,5,5,3,5,5,5,3,7,0,3,5,7,5,0,7,0,100] },
  { name: 'UC column', avg: '-5.49', max: '-5.00', x: 374, y: 208, s: .958,
    colors: 'qqqqbbbbbbbbtlgaaOOOOrORRRRRROROR' + 'RRORRRRRRRRrRR' + 'R'.repeat(22) + 'r' + 'RRRRRRRRrR' + 'oRRrmOyOyat' + 'oR' + 'agblagbbmYabbbbtbbbbY' + 'mallgymYgy' + 'R',
    bins: [47,0,0,0,3,3,3,0,3,7,7,7,3,7,3,9,0,11,7,0,7,0,0,5,5,7,3,7,9,3,3,100] },
  { name: 'LS column', avg: '-4.44', max: '-2.76', x: 368, y: 215, s: 1, query: 'LS c',
    colors: 'pbtctgggtlgggggyy' + 'mmmmmmmm' + 'aaaaa' + 'ooo' + 'OOooOOoOoOOorO' + 'OORrRrRrrRrrRrOOOOOooo' + 'r' + 'OrrrOOOOOroOOoooooooooO' + 'aammaammaoayYlgmlgttg' + 'lmmmmmmmmm' + 'R',
    bins: [10,0,10,0,10,0,35,10,18,44,35,18,18,26,10,26,60,100,69,35,69,77,86,69,86,44,35,44,18,18,26,10] },
  { name: 'CD column', avg: '-5.25', max: '-5.00', x: 353, y: 247, s: .914, query: 'CD',
    colors: 'b'.repeat(21) + 'tclgYlaYRrRO' + 'rrORRRRRRRRRRR' + 'R'.repeat(22) + 'R' + 'R'.repeat(23) + 'RRRRrRRrrrORRRrRrOaab' + 'bbbkbbbbbb' + 'R',
    bins: [44,3,0,3,0,0,3,0,3,0,0,5,0,0,3,3,0,0,5,3,0,0,0,3,3,3,0,4,8,3,4,100] }
];
function network(p) {
  const at = n => [(p.x + (n.x - 310) / 3 * p.s).toFixed(1), (p.y + (n.y - 32) / 3 * p.s).toFixed(1)];
  const col = i => palette[p.colors[i]];
  return edges.map(([i, j]) => {
    const [x1, y1] = at(nodes[i]), [x2, y2] = at(nodes[j]);
    return `<line x1="${x1}" y1="${y1}" x2="${x2}" y2="${y2}" stroke="${css(col(i).map((v, k) => (v + col(j)[k]) / 2), .72)}"/>`;
  }).join('') + nodes.map((n, i) => {
    const [x, y] = at(n);
    return `<circle cx="${x}" cy="${y}" r="3.5" fill="${css(col(i))}" stroke="${css(col(i), .8)}"/>`;
  }).join('');
}
const icon = (id, cls) => `<svg class="${cls}"><use href="#${id}"/></svg>`;
document.getElementById('panes').innerHTML = panes.map((p, n) => `
<section class="relative flex min-h-0 flex-col bg-[#fcfcfc] text-[24px] font-light shadow-[0_2px_8px_rgba(0,0,0,0.08)]">
  <svg class="absolute inset-0 h-full w-full" viewBox="0 0 1150 656" preserveAspectRatio="xMinYMin">${network(p)}</svg>
  <div class="relative flex h-[80px] shrink-0 items-center border-b-2 border-[#dcdcdc] bg-[#f7f7f7] pr-[32px] pl-[39px]">
    <button aria-label="Close pane" class="pt-[3px] text-[#999]">${icon('times', 'size-[25px]')}</button>
    <span class="ml-auto text-[26px]">auto 7</span>
    ${icon('move', 'ml-[20px] size-[32px] fill-[#999]')}
  </div>
  <div class="relative flex min-h-0 flex-1 items-start px-[20px] pt-[20px]">
    <div class="flex w-[80px] flex-col gap-[22px]">
      <div class="flex flex-col overflow-hidden rounded-[10px] bg-white shadow-[0_1px_4px_rgba(0,0,0,0.3)]">
        <button aria-label="Pan" class="flex h-[80px] items-center justify-center border-b-2 border-[#d0d0d0] bg-[#576e7a]">${icon('move', 'size-[32px] fill-white')}</button>
        <button aria-label="Lasso" class="flex h-[80px] items-center justify-center border-b-2 border-[#d0d0d0]">${icon('lasso', 'h-[28px] w-[30px]')}</button>
        <button aria-label="Box select" class="flex h-[78px] items-center justify-center">${icon('square', 'h-[24px] w-[26px]')}</button>
      </div>
      <div class="flex flex-col overflow-hidden rounded-[10px] bg-white shadow-[0_1px_4px_rgba(0,0,0,0.3)]">
        <button aria-label="Play" class="flex h-[80px] items-center justify-center border-b-2 border-[#d0d0d0]">${icon('play', 'h-[24px] w-[22px]')}</button>
        <button aria-label="Colours" class="flex h-[78px] items-center justify-center">${icon('palette', 'h-[24px] w-[30px]')}</button>
      </div>
      <div class="flex flex-col overflow-hidden rounded-[10px] bg-white shadow-[0_1px_4px_rgba(0,0,0,0.3)]">
        <button aria-label="Download" class="flex h-[78px] items-center justify-center">${icon('download', 'h-[26px] w-[30px]')}</button>
      </div>
    </div>
    <div class="ml-[41px] flex flex-col gap-[23px]">
      <p class="flex h-[38px] items-center text-[26px]">128<span class="mx-[17px] text-[24px] text-[#aaa]">nodes</span>2,100<span class="ml-[18px] text-[24px] text-[#aaa]">rows</span></p>
      <button class="flex h-[38px] items-center gap-[11px] text-[24px]">${icon('grid', 'h-[26px] w-[30px] fill-[#999]')}All</button>
    </div>
    <div class="ml-auto w-[500px]">
      <div class="flex h-[78px] items-end px-[5px]">${p.bins.map((v, i) => `<i class="min-w-0 flex-1 ${v ? 'outline-1 -outline-offset-1 outline-black/15' : ''}" style="height:${v}%;background:${v ? binColors[i] : 'none'}"></i>`).join('')}</div>
      <div class="flex h-[46px] items-center justify-between px-[12px] text-[#aaa]"><span class="text-[26px] text-black">-7.00</span><div class="flex items-center gap-[52px]"><span>min</span>${icon('expand', 'size-[28px] fill-[#999]')}<span>max</span></div><span class="text-[26px] text-black">${p.max}</span></div>
      <div class="flex h-[70px] items-center px-[20px]">
        ${icon('brush', 'mr-[9px] size-[36px] ' + (p.query ? 'fill-[#f5802a]' : 'fill-[#999]'))}${p.name}
        <span class="ml-auto text-[#aaa]">avg</span><span class="ml-[10px]">${p.avg}</span>
      </div>
      ${p.query ? `<div class="mt-[6px] border-t-8 border-[#78909b]">
        <div class="flex h-[80px] items-center border-b-2 border-[#d0d0d0] bg-white">
          <button aria-label="Edit" class="flex h-full w-[78px] items-center justify-center border-r-2 border-[#d0d0d0] bg-[#fcfcfc]">${icon('pencil', 'size-[20px] fill-[#999]')}</button>
          <label for="find${n}" class="mr-[28px] ml-[25px] text-[#999]">${icon('search', 'size-[30px]')}</label>
          <input id="find${n}" value="${p.query}" class="min-w-0 flex-1 bg-transparent outline-none" aria-label="Find column">
        </div>
        <button class="flex h-[82px] w-full items-center justify-between border-b-2 border-[#78909b] bg-[#576e7a] px-[20px] text-white"><span>${p.name}</span><span>${p.avg}</span></button>
      </div>` : ''}
    </div>
  </div>
</section>`).join('');
</script>
</body>
</html>
